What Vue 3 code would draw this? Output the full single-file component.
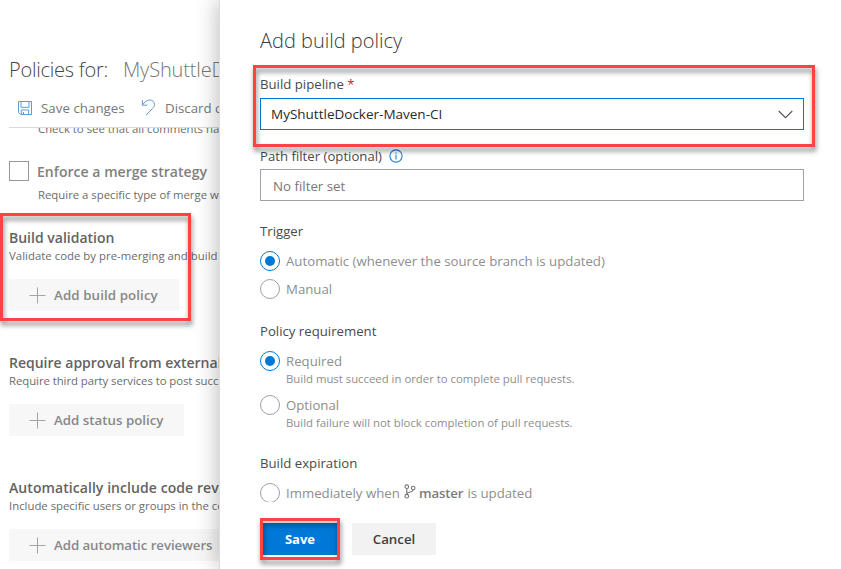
<script setup>
const sections = [
  { title: 'Build validation', desc: 'Validate code by pre-merging and build', action: 'Add build policy', kind: 'build' },
  { title: 'Require approval from external', desc: 'Require third party services to post succ', action: 'Add status policy', kind: 'status' },
  { title: 'Automatically include code rev', desc: 'Include specific users or groups in the co', action: 'Add automatic reviewers', kind: 'reviewers' },
]
</script>

<template>
  <div class="screen">
    <section class="policies">
      <h1><span class="for">Policies for:</span><span class="repo">MyShuttleD</span></h1>
      <div class="toolbar">
        <svg class="disk" width="16" height="16" viewBox="0 0 16 16">
          <path d="M1.5 1.5h13v13H3.6l-2.1-2.1zM4 1.5v5.8h8V1.5M4.3 14.5V10h7.4v4.5M6.5 14.5V12" />
        </svg>
        <span class="save-changes">Save changes</span>
        <svg class="undo" width="15" height="17" viewBox="0 0 15 17">
          <path d="M1.4 1.2v5h5M1.4 6.2C3.5 2.8 6 1 8.7 1c2.7 0 4.8 1.9 4.8 4.5 0 1.7-.7 2.7-1.9 3.9L5.2 16" />
        </svg>
        <span>Discard c</span>
      </div>
      <div class="scroller">
        <p class="desc comments">Check to see that all comments ha</p>
        <div class="merge">
          <i class="checkbox"></i>
          <div>
            <h2>Enforce a merge strategy</h2>
            <p class="desc">Require a specific type of merge w</p>
          </div>
        </div>
        <div v-for="s in sections" :key="s.kind" class="block" :class="s.kind">
          <h2>{{ s.title }}</h2>
          <p class="desc">{{ s.desc }}</p>
          <button class="add">
            <svg width="17" height="17" viewBox="0 0 17 17"><path d="M8.5 0.5v16M0.5 8.5h16" /></svg>
            <span>{{ s.action }}</span>
          </button>
        </div>
      </div>
    </section>

    <section class="panel">
      <div class="form">
        <h1>Add build policy</h1>
        <label class="label pipeline">Build pipeline <b>*</b></label>
        <div class="field select">
          <span>MyShuttleDocker-Maven-CI</span>
          <svg width="15" height="9" viewBox="0 0 15 9"><path d="M.7 1l6.8 6.7L14.3 1" /></svg>
        </div>
        <label class="label path">
          <span>Path filter (optional)</span>
          <svg width="14" height="14" viewBox="0 0 14 14">
            <circle cx="7" cy="7" r="6.1" /><path d="M7 5.8v4.7M7 3.4v1.3" />
          </svg>
        </label>
        <div class="field filter"><span>No filter set</span></div>

        <h3 class="label trigger">Trigger</h3>
        <div class="option"><i class="radio on"></i><span>Automatic (whenever the source branch is updated)</span></div>
        <div class="option next"><i class="radio"></i><span>Manual</span></div>

        <h3 class="label group">Policy requirement</h3>
        <div class="option"><i class="radio on"></i><span>Required</span></div>
        <p class="hint">Build must succeed in order to complete pull requests.</p>
        <div class="option next"><i class="radio"></i><span>Optional</span></div>
        <p class="hint">Build failure will not block completion of pull requests.</p>

        <h3 class="label group">Build expiration</h3>
        <div class="option">
          <i class="radio"></i>
          <span class="immediately">Immediately when</span>
          <svg class="branch" width="12" height="15" viewBox="0 0 12 15">
            <circle cx="2.8" cy="2.7" r="1.8" /><circle cx="2.8" cy="12.2" r="1.8" /><circle cx="9.2" cy="4" r="1.8" />
            <path d="M2.8 4.5v5.9M9.2 5.8C9.2 8.6 3.6 7.3 2.8 10.2" />
          </svg>
          <strong>master</strong>
          <span>is updated</span>
        </div>
      </div>
      <footer>
        <button class="primary">Save</button>
        <button class="cancel">Cancel</button>
      </footer>
    </section>

    <div class="mark mark-validation"></div>
    <div class="mark mark-pipeline"></div>
    <div class="mark mark-save"></div>
  </div>
</template>

<style>
body { margin: 0; background: #fff; }
</style>

<style scoped>
.screen {
  position: relative;
  display: flex;
  width: 841px;
  height: 569px;
  overflow: hidden;
  background: #fff;
  font-family: "Open Sans", "Noto Sans", sans-serif;
  font-size: 13.3px;
  white-space: nowrap;
}
h1, h2, h3, p { margin: 0; }
svg { flex: none; fill: none; }
button { border: 0; padding: 0; font: 600 13.3px "Open Sans", sans-serif; }

.policies {
  box-sizing: border-box;
  width: 219px;
  padding: 55px 0 0 9px;
  overflow: hidden;
  display: flex;
  flex-direction: column;
}
.policies h1 {
  display: flex;
  font-size: 20px;
  line-height: 30px;
  font-weight: 300;
  color: #444;
}
.for { flex: none; width: 114px; letter-spacing: -.25px; }
.repo { color: #777; letter-spacing: -.15px; }
.toolbar {
  box-sizing: border-box;
  display: flex;
  align-items: center;
  height: 43px;
  padding: 4px 0 0 8px;
  border-bottom: 1px solid #d9d9d9;
  color: #777;
}
.toolbar svg { stroke: #5d9bd4; stroke-width: 1; }
.disk { margin-right: 8px; }
.save-changes { flex: none; width: 100px; letter-spacing: .03px; }
.undo { margin-right: 9px; position: relative; top: -1px; }
.scroller { flex: 1; overflow: hidden; }
.desc { font-size: 11.35px; line-height: 16px; color: #6c6c6c; }
.comments { margin: -7px 0 0 29px; }
.merge { display: flex; margin-top: 24px; }
.checkbox {
  box-sizing: border-box;
  width: 20px;
  height: 20px;
  flex: none;
  margin-right: 8px;
  border: 1px solid #989898;
}
.merge > div { display: flex; flex-direction: column; gap: 5px; padding-top: 1px; }
h2 { font-size: 14px; line-height: 20px; font-weight: 600; color: #636363; }
.merge h2 { color: #808080; letter-spacing: .04px; }
.merge .desc { padding-left: 1px; }
.block { height: 125px; }
.block.build { margin-top: 25px; }
.build .desc { letter-spacing: .03px; }
.status .desc { letter-spacing: -.05px; }
.reviewers h2 { letter-spacing: .07px; }
.add {
  display: flex;
  align-items: center;
  height: 32px;
  margin-top: 15px;
  padding: 0 20px;
  gap: 8px;
  background: #f7f7f7;
  color: #888;
}
.add svg { stroke: #a0a5a9; stroke-width: 1; }
.build .add { width: 170px; letter-spacing: .1px; }
.status .add { width: 175px; }
.reviewers .add { width: 226px; letter-spacing: -.08px; }

.panel {
  box-sizing: border-box;
  position: relative;
  width: 622px;
  border-left: 1px solid #dcdcdc;
  padding-left: 40px;
  background: #fff;
  box-shadow: -2px 0 20px rgba(0, 0, 0, .25);
}
.form { height: 502px; overflow: hidden; display: flex; flex-direction: column; }
.form > * { flex-shrink: 0; }
.form h1 {
  padding-top: 26px;
  font-size: 20px;
  line-height: 30px;
  font-weight: 300;
  color: #3a3a3a;
}
.label { line-height: 20px; font-size: 13.2px; font-weight: 400; color: #4a4a4a; }
.pipeline { margin-top: 18px; }
.pipeline b { font-weight: 400; color: #d0222f; }
.field {
  box-sizing: border-box;
  display: flex;
  align-items: center;
  justify-content: space-between;
  width: 544px;
  height: 32px;
  border: 1px solid #a2a2a2;
}
.select { margin-top: 4px; padding: 0 10px; border-color: #0078d4; color: #2a2a2a; font-size: 13.5px; }
.select svg { stroke: #555; stroke-width: 1.1; }
.path { display: flex; align-items: center; gap: 7px; margin-top: 16px; }
.path svg { stroke: #1b82d6; stroke-width: 1.1; }
.filter { margin-top: 3px; padding: 1px 0 0 12px; color: #777; }
.trigger { margin: 20px 0 10px; }
.group { margin: 22px 0 10px; }
.option { display: flex; align-items: center; height: 20px; color: #8e8e8e; font-size: 13.22px; }
.option.next { margin-top: 8px; }
.radio {
  box-sizing: border-box;
  display: grid;
  place-items: center;
  width: 20px;
  height: 20px;
  margin-right: 6px;
  flex: none;
  border: 1px solid #a0a0a0;
  border-radius: 50%;
}
.radio.on { border-color: #0078d4; }
.radio.on::after { content: ""; width: 10px; height: 10px; border-radius: 50%; background: #0078d4; }
.hint { height: 16px; padding-left: 26px; font-size: 11.35px; line-height: 16px; color: #8e8e8e; }
.immediately { width: 118px; }
.branch { stroke: #777; stroke-width: 1.1; position: relative; top: -2px; }
.option strong { margin: 0 4px 0 3px; font-weight: 600; color: #7c7c7c; letter-spacing: -.15px; }
footer { display: flex; gap: 12px; padding-top: 21px; }
footer button { height: 32px; }
.primary { width: 80px; background: #0078d7; color: #fff; font-weight: 700; font-size: 13px; }
.cancel { width: 84px; background: #f2f2f2; color: #3f3f3f; }

.mark {
  box-sizing: border-box;
  position: absolute;
  border: 3px solid #ff4343;
  filter: drop-shadow(1px 4px 2.5px rgba(0, 0, 0, .5));
}
.mark-validation { left: 0; top: 213px; width: 191px; height: 108px; }
.mark-pipeline { left: 253px; top: 65px; width: 562px; height: 82px; }
.mark-save { left: 260px; top: 518px; width: 80px; height: 42px; }
</style>
